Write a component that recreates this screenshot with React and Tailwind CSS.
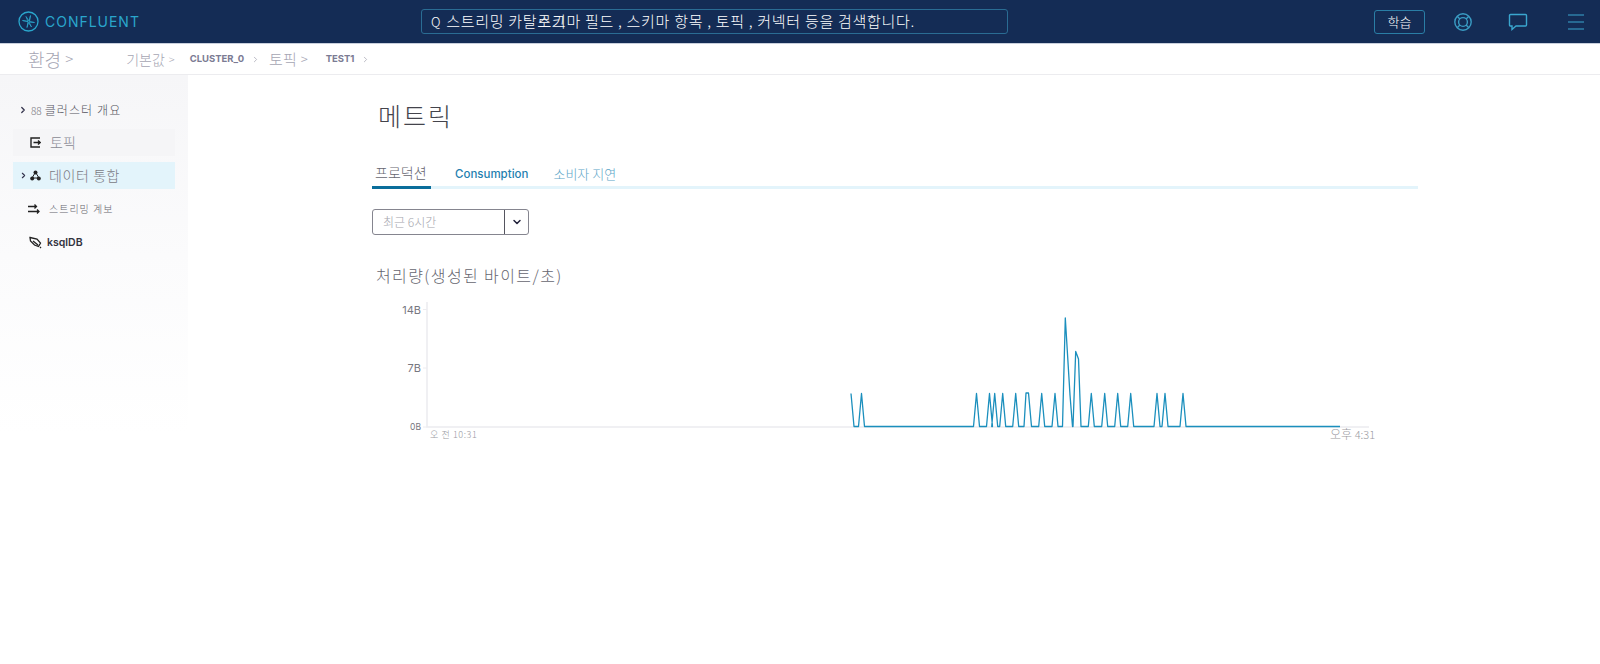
import React from "react";
import { ChevronRight, ChevronDown } from "lucide-react";

const kr = "font-['Noto_Sans_CJK_KR','Noto_Sans',sans-serif]";
const inter = "font-['Inter','Noto_Sans_CJK_KR',sans-serif]";

// Chart data, one entry per vertex [x, y]
const BASE = 426.5;
const PEAK = 393.5;
const spike = (x, y = PEAK) => [
  [x - 3, BASE],
  [x, y],
  [x + 3, BASE],
];
const linePoints = [
  [851, PEAK],
  [854, BASE],
  ...spike(861.5),
  ...spike(976.5),
  ...spike(989.5),
  ...spike(994.7),
  ...spike(1002.7),
  ...spike(1015.7),
  [1024, BASE],
  [1026, 393],
  [1028.5, 393],
  [1031.5, BASE],
  ...spike(1041.7),
  ...spike(1055),
  [1062.5, BASE],
  [1065.3, 318],
  [1070, 395],
  [1072.5, BASE],
  [1073, BASE],
  [1075.7, 351.5],
  [1078.5, 359],
  [1081, BASE],
  ...spike(1091.3),
  ...spike(1104.7),
  ...spike(1117.7),
  ...spike(1130.7),
  ...spike(1157),
  ...spike(1165),
  ...spike(1183),
  [1340, BASE],
];

const Logo = () => (
  <svg width="21" height="21" viewBox="0 0 21 21" fill="none" stroke="#2aa6cc">
    <circle cx="10.5" cy="10.5" r="9.5" strokeWidth="1.3" />
    <path d="M4.5 9.5L10 10.5 8 5.5 11 10 12.5 4.5 11.5 10.5 16.5 11.5 11 11 13.5 16 10.5 11.5 9 16.5 10 10.5z" strokeWidth="0.8" />
  </svg>
);

const Crumb = ({ children, className, sep = "text-[11px]" }) => (
  <div className="flex items-center shrink-0">
    <span className={className}>{children}</span>
    <span className={`${sep} text-[#a5a5b3] ml-1`}>&gt;</span>
  </div>
);

const Header = () => (
  <header className="h-[44px] bg-[#142c55] border-b border-[#c8cfdc] flex items-center shrink-0">
    <div className="w-[421px] pl-[18px] flex items-center gap-[6px] shrink-0">
      <Logo />
      <span className={`${inter} text-[14px] tracking-[0.07em] text-[#2aa6cc]`}>CONFLUENT</span>
    </div>
    <div className={`${kr} w-[587px] h-[25px] rounded-[3px] border border-[#2a6c93] flex items-center pl-[9px] text-white text-[15px] tracking-[0.72px] font-light whitespace-nowrap`}>
      <span className="mr-[5px] text-[13px]">Q</span>
      <span>스트리밍 카탈로그</span>
      <span className="ml-[-29px]">스키마 필드 , 스키마 항목 , 토픽 , 커넥터 등을 검색합니다.</span>
    </div>
    <button className={`${kr} ml-[366px] w-[51px] h-[24px] rounded-[3px] border border-[#2a7ea6] text-white text-[13px] font-light`}>학습</button>
    <svg className="ml-[28px]" width="20" height="20" viewBox="0 0 20 20" fill="none" stroke="#3a9cc4" strokeWidth="1.4">
      <circle cx="10" cy="10" r="8.2" />
      <circle cx="10" cy="10" r="4.4" />
      <path d="M4.2 4.2l2.7 2.7M15.8 4.2l-2.7 2.7M4.2 15.8l2.7-2.7M15.8 15.8l-2.7-2.7" />
    </svg>
    <svg className="ml-[35px]" width="20" height="20" viewBox="0 0 20 20" fill="none" stroke="#3aa6cf" strokeWidth="1.4">
      <path d="M2.5 2.5h15a1 1 0 0 1 1 1v9.5a1 1 0 0 1-1 1H8L4 17.5V14H2.5a1 1 0 0 1-1-1V3.5a1 1 0 0 1 1-1z" />
    </svg>
    <svg className="ml-[40px]" width="16" height="18" viewBox="0 0 16 18" fill="none" stroke="#3aa6cf" strokeWidth="1.2">
      <path d="M0 2h16M0 9h16M0 16h16" />
    </svg>
  </header>
);

const Breadcrumbs = () => (
  <nav className={`${kr} h-[31px] border-b border-[#ececef] flex items-center pl-[28px] font-light text-[#a5a5b3] shrink-0`}>
    <Crumb className="text-[18px]" sep="text-[15px]">환경</Crumb>
    <div className="w-[53px] shrink-0" />
    <Crumb className="text-[14px]">기본값</Crumb>
    <div className="w-[15px] shrink-0" />
    <span className={`${inter} text-[9.5px] font-bold text-[#7b7b93]`}>CLUSTER_0</span>
    <ChevronRight className="ml-[7px] text-[#a5a5b3]" size={9} />
    <div className="w-[9px] shrink-0" />
    <Crumb className="text-[15px]" sep="text-[13px]">토픽</Crumb>
    <div className="w-[18px] shrink-0" />
    <span className={`${inter} text-[9.5px] font-bold text-[#7b7b93]`}>TEST1</span>
    <ChevronRight className="ml-[7px] text-[#a5a5b3]" size={9} />
  </nav>
);

const Sidebar = () => (
  <aside className="w-[188px] shrink-0 bg-gradient-to-b from-[#f6f6f8] via-[#fbfbfc] to-white h-[360px] pl-[13px] pr-[13px] pt-[22px]">
    <div className={`${kr} h-[26px] flex items-center pl-[5px] text-[12px] tracking-[1.1px] font-light text-[#55555f]`}>
      <ChevronRight className="text-[#33334d] mr-[3px]" size={10} strokeWidth={3} />
      <span className="text-[#77777f] text-[10px] tracking-normal mr-[3px]">88</span>
      클러스터 개요
    </div>
    <div className={`${kr} mt-[6px] h-[27px] bg-[#f5f5f7] flex items-center pl-[17px] text-[14px] font-light text-[#8a8a94]`}>
      <svg width="11" height="11" viewBox="0 0 11 11" fill="none" stroke="#222" strokeWidth="1.4" className="mr-[9px]">
        <path d="M10 1H1v9h9M3.5 5.5h7M8 3.5l2.2 2-2.2 2" />
      </svg>
      토픽
    </div>
    <div className={`${kr} mt-[6px] h-[27px] bg-[#e3f4fb] flex items-center pl-[6px] text-[14px] tracking-[0.6px] font-light text-[#7a7a84]`}>
      <ChevronRight className="text-[#33334d] mr-[2px]" size={9} strokeWidth={3} />
      <svg width="11" height="11" viewBox="0 0 11 11" className="mr-[8px]" fill="#222">
        <circle cx="5.5" cy="2.5" r="2" />
        <circle cx="2.2" cy="8.5" r="2" />
        <circle cx="8.8" cy="8.5" r="2" />
        <path d="M5 3L2 8h7L6 3z" fill="none" stroke="#222" />
      </svg>
      데이터 통합
    </div>
    <div className={`${kr} mt-[6px] h-[27px] flex items-center pl-[15px] text-[10px] font-light text-[#66666f] tracking-[0.1em]`}>
      <svg width="12" height="10" viewBox="0 0 12 10" fill="none" stroke="#222" strokeWidth="1.3" className="mr-[9px]">
        <path d="M0 2.5h8M0 7.5h11M6.5 0.5l2 2-2 2M9 5.5l2 2-2 2" />
      </svg>
      스트리밍 계보
    </div>
    <div className={`${inter} mt-[7px] h-[27px] flex items-center pl-[16px] text-[10.5px] font-semibold text-[#33333f]`}>
      <svg width="13" height="13" viewBox="0 0 13 13" fill="none" stroke="#222" strokeWidth="1.3" className="mr-[5px]">
        <path d="M1 1.5l7 1.5 3.5 4-2 3.5-4-1.5L1.5 5zM4 5l5 4M11 11l1 1" />
      </svg>
      ksqlDB
    </div>
  </aside>
);

const Tabs = () => (
  <div className="mt-[25px] h-[31px] border-b-[3px] border-[#e3f4fb] flex items-center">
    <div className={`${kr} w-[59px] h-[31px] border-b-[3px] border-[#0a6e9b] mb-[-3px] pl-[3px] pt-[4px] text-[14px] font-light text-[#66666f] whitespace-nowrap`}>프로덕션</div>
    <div className={`${inter} ml-[24px] mt-[6px] text-[11.5px] font-medium text-[#1f7fb0]`}>Consumption</div>
    <div className={`${kr} ml-[25px] mt-[3px] text-[13px] font-light text-[#5da6c8]`}>소비자 지연</div>
  </div>
);

const TimeSelect = () => (
  <div className="mt-[20px] w-[157px] h-[26px] rounded-[3px] border border-[#85858f] flex items-stretch">
    <div className={`${kr} flex-1 flex items-center pl-[10px] text-[12px] font-light text-[#a5a5ad]`}>최근 6시간</div>
    <div className="w-[24px] border-l border-[#55555f] flex items-center justify-center">
      <ChevronDown size={12} strokeWidth={3} className="text-[#22223a]" />
    </div>
  </div>
);

// Chart svg spans x 372-1418, so the page coordinates above need this offset
const Chart = () => (
  <svg className="mt-[9px] block" width="1046" height="150" viewBox="372 296 1046 150">
    <path d="M427 302V427H1369" fill="none" stroke="#ececf0" strokeWidth="1.5" />
    <path d="M423 309.5h4M423 368h4M423 427h4" stroke="#ececf0" />
    <polyline
      points={linePoints.map((p) => p.join(",")).join(" ")}
      fill="none"
      stroke="#1b8fbd"
      strokeWidth="1.3"
      strokeLinejoin="round"
    />
    <g fontFamily="Inter, sans-serif" fill="#77777f" fontSize="11" textAnchor="end">
      <text x="421" y="314">14B</text>
      <text x="421" y="372">7B</text>
      <text x="421" y="430" fontSize="8.5">0B</text>
    </g>
    <g fontFamily="'Noto Sans CJK KR', sans-serif" fontWeight="300" fill="#9a9aa2">
      <text x="430" y="438" fontSize="9" letterSpacing="0.6">오 전 10:31</text>
      <text x="1330" y="439" fontSize="12">오후 <tspan fontSize="11">4:31</tspan></text>
    </g>
  </svg>
);

export default function App() {
  return (
    <div className="w-[1600px] h-[664px] bg-white flex flex-col overflow-hidden">
      <Header />
      <Breadcrumbs />
      <div className="flex">
        <Sidebar />
        <main className="ml-[184px] w-[1046px] pt-[22px]">
          <h1 className={`${kr} pl-[6px] text-[25px] leading-[36px] font-light tracking-[0.08em] text-[#44444c]`}>메트릭</h1>
          <Tabs />
          <TimeSelect />
          <h2 className={`${kr} mt-[28px] pl-[4px] text-[16px] leading-[24px] font-light tracking-[1.4px] text-[#66666f]`}>처리량(생성된 바이트/초)</h2>
          <Chart />
        </main>
      </div>
    </div>
  );
}
